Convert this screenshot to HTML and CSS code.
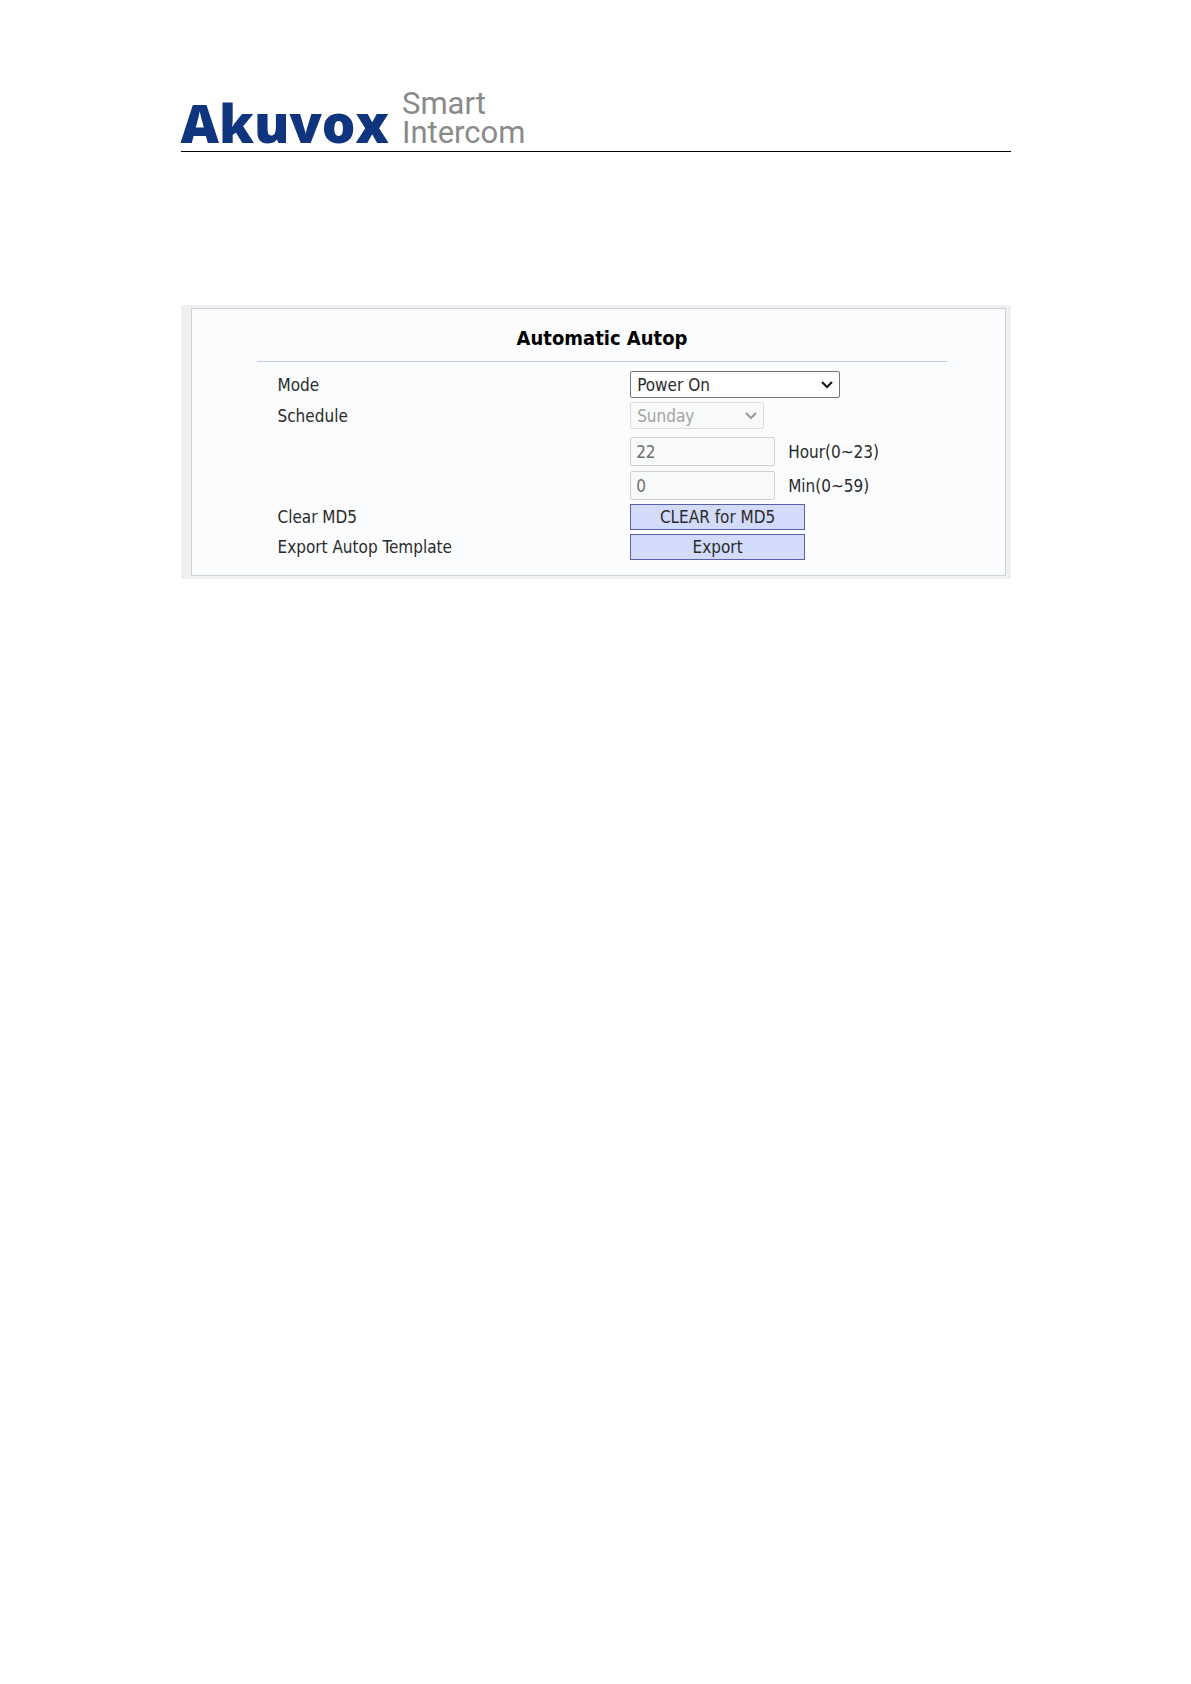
FILE: index.html
```html
<!DOCTYPE html>
<html lang="en">
<head>
    <meta charset="UTF-8">
    <meta name="viewport" content="width=device-width, initial-scale=1.0">
    <title>Automatic Autop</title>
    <link rel="stylesheet" href="styles.css">
</head>
<body>
    <div id="wrapper">
        <header class="header">
            <span class="brand">Akuvox</span>
            <span class="tagline"><span>Smart</span><span>Intercom</span></span>
        </header>
        <main class="panel">
            <form class="autop">
                <h1>Automatic Autop</h1>
                <div class="row">
                    <label for="mode">Mode</label>
                    <select id="mode" class="mode">
                        <option>Power On</option>
                    </select>
                </div>
                <div class="row">
                    <label for="day">Schedule</label>
                    <select id="day" class="day" disabled>
                        <option>Sunday</option>
                    </select>
                </div>
                <div class="row times">
                    <div class="time">
                        <input type="text" id="hour" value="22" disabled>
                        <label for="hour">Hour(0~23)</label>
                    </div>
                    <div class="time">
                        <input type="text" id="min" value="0" disabled>
                        <label for="min">Min(0~59)</label>
                    </div>
                </div>
                <div class="row">
                    <label for="clear">Clear MD5</label>
                    <button type="button" id="clear">CLEAR for MD5</button>
                </div>
                <div class="row">
                    <label for="export">Export Autop Template</label>
                    <button type="button" id="export">Export</button>
                </div>
            </form>
        </main>
    </div>
</body>
</html>
```
FILE: styles.css
```css
* {
    box-sizing: border-box;
}

body {
    margin: 0;
    background: #ffffff;
    color: #2b2b2b;
    font-family: "DejaVu Sans Condensed", Tahoma, sans-serif;
    font-size: 17px;
    line-height: 24px;
}

#wrapper {
    max-width: 830px;
    margin: 0 auto;
    padding-top: 89px;
}

.header {
    display: flex;
    align-items: last baseline;
    gap: 13px;
    border-bottom: 1px solid #000000;
}

.brand {
    color: #10357f;
    font-family: "Open Sans", sans-serif;
    font-size: 53px;
    font-weight: 800;
    line-height: 56px;
}

.tagline {
    display: flex;
    flex-direction: column;
    color: #8a8a8a;
    font-family: Roboto, sans-serif;
    font-size: 31px;
    font-weight: 400;
    line-height: 29px;
}

.panel {
    margin-top: 153px;
    padding: 3px 5px 3px 10px;
    background: #efefef;
}

.autop {
    display: flex;
    flex-direction: column;
    gap: 4px;
    padding: 14px 57px 15px 65px;
    border: 1px solid #cfd3de;
    background: #fafcfd;
}

h1 {
    margin: 0 0 5px;
    padding: 0 0 8px;
    border-bottom: 1px solid #c5cce6;
    color: #000000;
    font-size: 20px;
    line-height: 30px;
    text-align: center;
}

.row {
    display: grid;
    grid-template-columns: 10fr 9fr;
    align-items: center;
    justify-items: start;
    padding-left: 21px;
}

.times {
    row-gap: 5px;
    padding-top: 4px;
}

.time {
    grid-column: 2;
    display: flex;
    align-items: center;
    gap: 13px;
}

select,
input,
button {
    font: inherit;
    color: inherit;
}

select {
    height: 27px;
    padding: 0 6px;
    border: 1px solid #767676;
    border-radius: 2px;
    appearance: none;
    background: #ffffff url("data:image/svg+xml,%3Csvg xmlns='http://www.w3.org/2000/svg' width='12' height='8'%3E%3Cpath d='M1 1l5 5 5-5' fill='none' stroke='%23111' stroke-width='2'/%3E%3C/svg%3E") no-repeat right 6px center;
}

select:disabled {
    border-color: #dddddd;
    background-color: #f8f9f9;
    background-image: url("data:image/svg+xml,%3Csvg xmlns='http://www.w3.org/2000/svg' width='12' height='8'%3E%3Cpath d='M1 1l5 5 5-5' fill='none' stroke='%239a9a9a' stroke-width='2'/%3E%3C/svg%3E");
    color: #a3a3a3;
    opacity: 1;
}

.mode {
    width: 210px;
}

.day {
    width: 134px;
}

input {
    width: 145px;
    height: 29px;
    padding: 0 5px;
    border: 1px solid #d0d0d0;
    border-radius: 2px;
    background: #f9fafa;
}

input:disabled {
    color: #707070;
}

button {
    width: 175px;
    height: 26px;
    padding: 0;
    border: 1px solid #5a5fa8;
    background: #d2dbf9;
}

@media only screen and (max-width: 800px) {
    #wrapper {
        margin: 0 10px;
    }

    .autop {
        padding: 14px 10px 15px;
    }
}
```
